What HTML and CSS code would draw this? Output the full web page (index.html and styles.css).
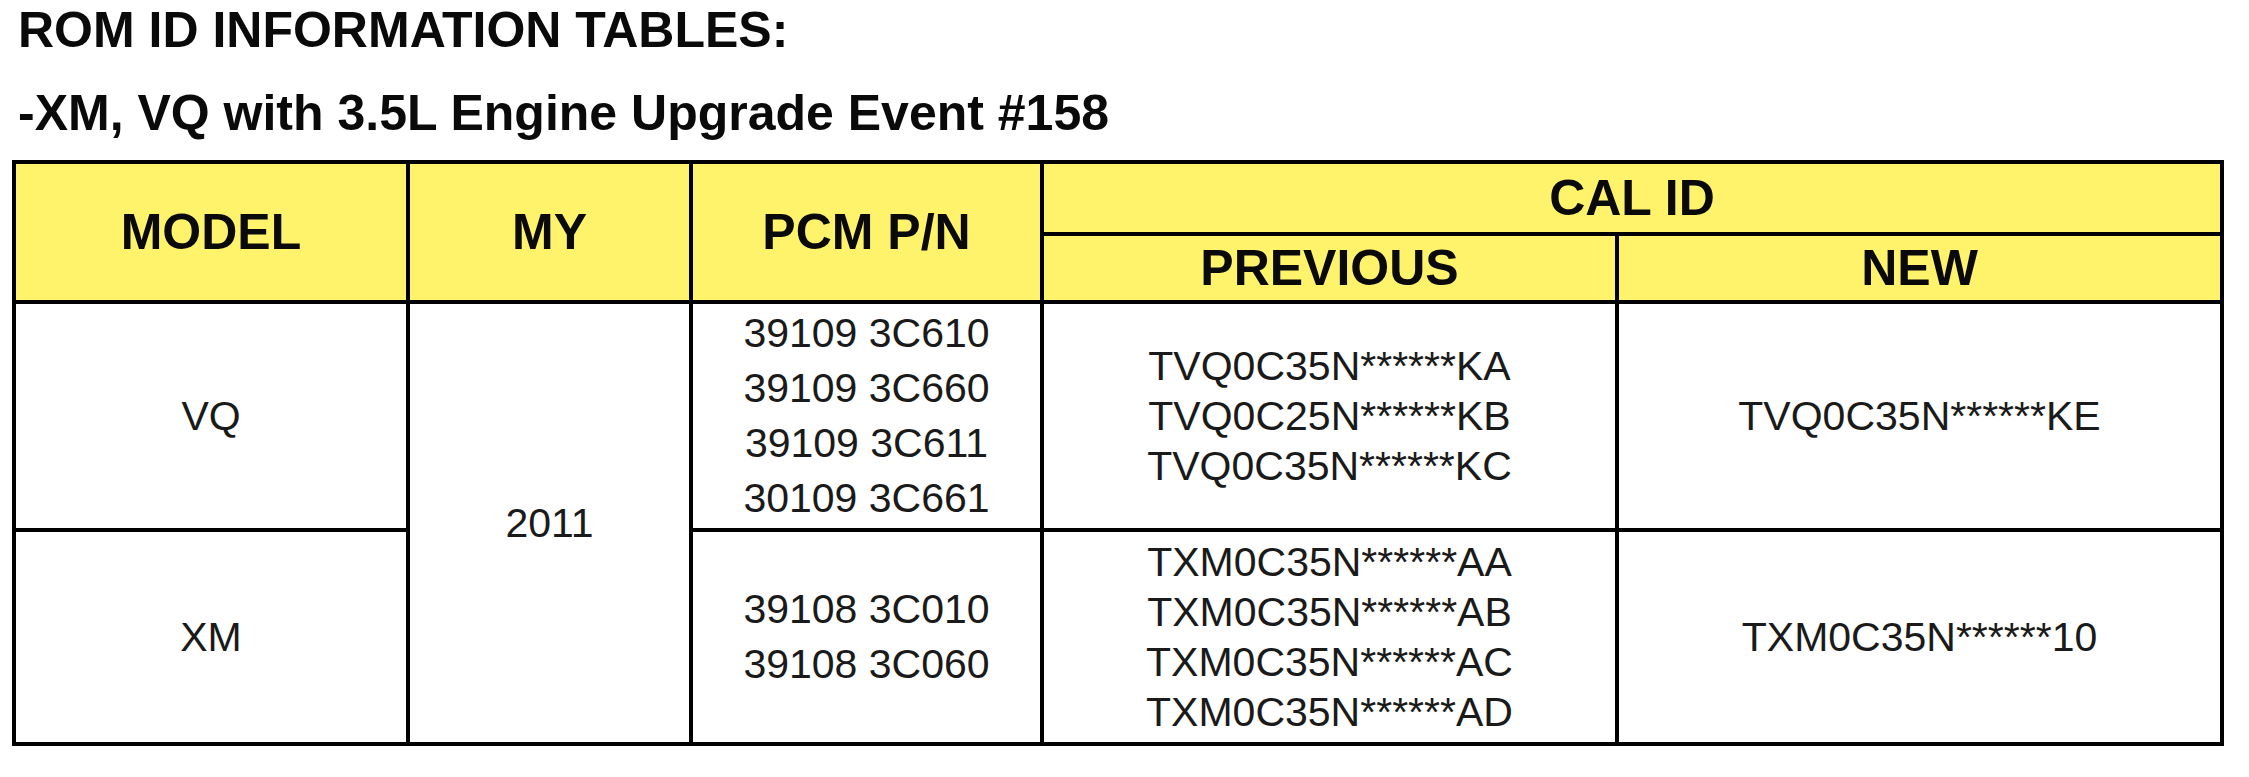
FILE: index.html
```html
<!DOCTYPE html>
<html lang="en">
<head>
<meta charset="utf-8">
<title>ROM ID Information Tables</title>
<link rel="stylesheet" href="styles.css">
</head>
<body>
<div class="page">
  <h1 class="title">ROM ID INFORMATION TABLES:</h1>
  <h2 class="subtitle">-XM, VQ with 3.5L Engine Upgrade Event #158</h2>
  <div class="rom-table">
    <div class="cell head c-model">MODEL</div>
    <div class="cell head c-my">MY</div>
    <div class="cell head c-pcm">PCM P/N</div>
    <div class="cell head c-cal">CAL ID</div>
    <div class="cell head c-prev">PREVIOUS</div>
    <div class="cell head c-new">NEW</div>

    <div class="cell body r1 col1">VQ</div>
    <div class="cell body c-year">2011</div>
    <div class="cell body r1 col3 pn">
      <span>39109 3C610</span>
      <span>39109 3C660</span>
      <span>39109 3C611</span>
      <span>30109 3C661</span>
    </div>
    <div class="cell body r1 col4 cal">
      <span>TVQ0C35N******KA</span>
      <span>TVQ0C25N******KB</span>
      <span>TVQ0C35N******KC</span>
    </div>
    <div class="cell body r1 col5">TVQ0C35N******KE</div>

    <div class="cell body r2 col1">XM</div>
    <div class="cell body r2 col3 pn">
      <span>39108 3C010</span>
      <span>39108 3C060</span>
    </div>
    <div class="cell body r2 col4 cal">
      <span>TXM0C35N******AA</span>
      <span>TXM0C35N******AB</span>
      <span>TXM0C35N******AC</span>
      <span>TXM0C35N******AD</span>
    </div>
    <div class="cell body r2 col5">TXM0C35N******10</div>
  </div>
</div>
</body>
</html>
```

FILE: styles.css
```css
html, body {
  margin: 0;
  padding: 0;
  background: #ffffff;
}

body {
  font-family: "Liberation Sans", Arial, sans-serif;
  color: #111111;
}

.page {
  padding-top: 2px;
}

.title,
.subtitle {
  margin: 0;
  padding-left: 18px;
  font-size: 50px;
  line-height: 56px;
  font-weight: 700;
  color: #0a0a0a;
}

.subtitle {
  margin-top: 27px;
}

.rom-table {
  display: grid;
  width: max-content;
  margin: 19px 0 0 12px;
  padding: 4px;
  gap: 4px;
  background: #000000;
  grid-template-columns: 390px 279px 347px 571px 601px;
  grid-template-rows: 68px 64px 224px 210px;
}

.cell {
  display: flex;
  flex-direction: column;
  align-items: center;
  justify-content: center;
  background: #ffffff;
  text-align: center;
}

.head {
  background: #fff36b;
  font-size: 50px;
  font-weight: 700;
  color: #0a0a0a;
  line-height: 56px;
}

.body {
  font-size: 41px;
  line-height: 50px;
  color: #1a1a1a;
}

.pn {
  line-height: 55px;
}

.c-model { grid-column: 1; grid-row: 1 / 3; }
.c-my    { grid-column: 2; grid-row: 1 / 3; }
.c-pcm   { grid-column: 3; grid-row: 1 / 3; }
.c-cal   { grid-column: 4 / 6; grid-row: 1; }
.c-prev  { grid-column: 4; grid-row: 2; }
.c-new   { grid-column: 5; grid-row: 2; }
.c-year  { grid-column: 2; grid-row: 3 / 5; }

.r1 { grid-row: 3; }
.r2 { grid-row: 4; }
.col1 { grid-column: 1; }
.col3 { grid-column: 3; }
.col4 { grid-column: 4; }
.col5 { grid-column: 5; }
```
